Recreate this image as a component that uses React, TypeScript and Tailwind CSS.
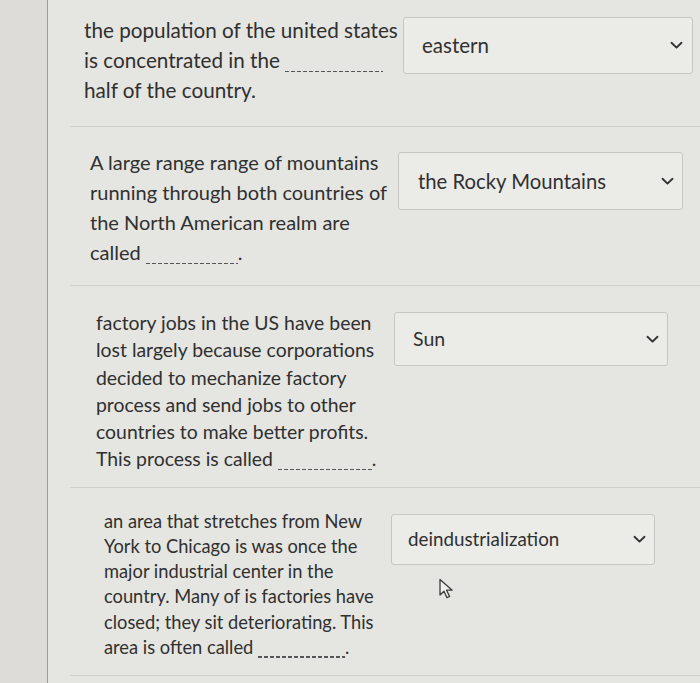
import type { ReactNode } from 'react'

function Chevron() {
  return (
    <svg width="13" height="9" viewBox="0 0 13 9" fill="none" aria-hidden="true">
      <path d="M1.5 1.8l5 4.8 5-4.8" stroke="#333" strokeWidth="1.9" strokeLinecap="round" strokeLinejoin="round" />
    </svg>
  )
}

function Blank({ w }: { w: string }) {
  return (
    <span
      className={`inline-block ${w} h-[1.5px] relative top-[4px] bg-[repeating-linear-gradient(90deg,#555_0_4px,transparent_4px_6px)]`}
    />
  )
}

function Pointer() {
  return (
    <svg width="18" height="22" viewBox="0 0 18 22" fill="none" aria-hidden="true">
      <path
        d="M2 1.5v15.5l4-3.8 3 6.5 2.6-1.2-3-6.3h5.6z"
        fill="#f1f1ee"
        stroke="#3c3c3c"
        strokeWidth="1.3"
        strokeLinejoin="round"
      />
    </svg>
  )
}

function Select({ label, cls }: { label: ReactNode; cls: string }) {
  return (
    <div
      className={`shrink-0 flex items-center justify-between rounded-[3px] border border-[#c6c6c2] bg-[#ebebe8] text-[#303030] ${cls}`}
    >
      <span>{label}</span>
      <Chevron />
    </div>
  )
}

export default function App() {
  return (
    <div
      className="w-[700px] h-[683px] overflow-hidden flex bg-[#e5e5e1] text-[#303030]"
      style={{ fontFamily: 'Lato, "Open Sans", sans-serif' }}
    >
      <div className="w-[48px] shrink-0 border-r border-[#9c9c98] bg-[#dddcd8]" />
      <div className="flex-1 flex flex-col pl-[22px]">
        {/* question 1 */}
        <section className="flex items-start pl-[14px] pt-[15px] pb-[21px] border-b border-[#cfcfcb]">
          <p className="w-[319px] shrink-0 whitespace-nowrap text-[20.7px] leading-[30px]">
            the population of the united states
            <br />
            is concentrated in the <Blank w="w-[98px]" />
            <br />
            half of the country.
          </p>
          <Select label="eastern" cls="w-[290px] h-[57px] mt-[2px] text-[20.5px] pl-[18px] pr-[9px]" />
        </section>

        {/* question 2 */}
        <section className="flex items-start pl-[20px] pt-[20px] pb-[18px] border-b border-[#cfcfcb]">
          <p className="w-[308px] shrink-0 whitespace-nowrap text-[20px] leading-[30px]">
            A large range range of mountains
            <br />
            running through both countries of
            <br />
            the North American realm are
            <br />
            called <Blank w="w-[92px]" />.
          </p>
          <Select label="the Rocky Mountains" cls="w-[285px] h-[58px] mt-[5px] text-[20.3px] pl-[19px] pr-[8px]" />
        </section>

        {/* question 3 */}
        <section className="flex items-start pl-[26px] pt-[23px] pb-[14px] border-b border-[#cfcfcb]">
          <p className="w-[298px] shrink-0 whitespace-nowrap text-[19.4px] leading-[27.3px]">
            factory jobs in the US have been
            <br />
            lost largely because corporations
            <br />
            decided to mechanize factory
            <br />
            process and send jobs to other
            <br />
            countries to make better profits.
            <br />
            This process is called <Blank w="w-[94px]" />.
          </p>
          <Select label="Sun" cls="w-[274px] h-[54px] mt-[3px] text-[19.5px] pl-[18px] pr-[8px]" />
        </section>

        {/* question 4 */}
        <section className="relative flex items-start pl-[34px] pt-[21px] pb-[15px] border-b border-[#cfcfcb]">
          <p className="w-[287px] shrink-0 whitespace-nowrap text-[18.3px] leading-[25.2px]">
            an area that stretches from New
            <br />
            York to Chicago is was once the
            <br />
            major industrial center in the
            <br />
            country. Many of is factories have
            <br />
            closed; they sit deteriorating. This
            <br />
            area is often called <Blank w="w-[87px]" />.
          </p>
          <Select label="deindustrialization" cls="w-[264px] h-[51px] mt-[5px] text-[18.8px] pl-[16px] pr-[8px]" />
          <div className="absolute left-[368px] top-[90px]">
            <Pointer />
          </div>
        </section>
      </div>
    </div>
  )
}
